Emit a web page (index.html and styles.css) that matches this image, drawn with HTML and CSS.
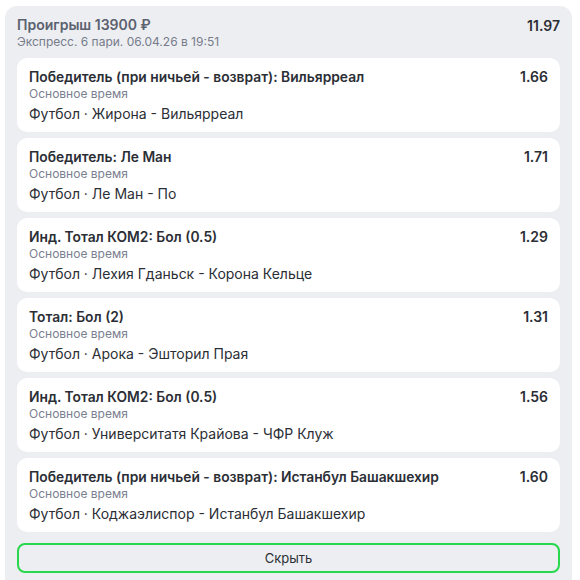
FILE: index.html
```html
<!DOCTYPE html>
<html lang="ru">
<head>
<meta charset="utf-8">
<link rel="stylesheet" href="styles.css">
</head>
<body>
<div class="bet">
  <div class="bet-head">
    <div class="bet-info">
      <div class="bet-title">Проигрыш 13900 ₽</div>
      <div class="bet-date">Экспресс. 6 пари. 06.04.26 в 19:51</div>
    </div>
    <div class="bet-odds">11.97</div>
  </div>
  <div class="events">
    <div class="event">
      <div class="event-row"><div class="event-title">Победитель (при ничьей - возврат): Вильярреал</div><div class="event-odds">1.66</div></div>
      <div class="event-sub">Основное время</div>
      <div class="event-match">Футбол · Жирона - Вильярреал</div>
    </div>
    <div class="event">
      <div class="event-row"><div class="event-title">Победитель: Ле Ман</div><div class="event-odds">1.71</div></div>
      <div class="event-sub">Основное время</div>
      <div class="event-match">Футбол · Ле Ман - По</div>
    </div>
    <div class="event">
      <div class="event-row"><div class="event-title">Инд. Тотал КОМ2: Бол (0.5)</div><div class="event-odds">1.29</div></div>
      <div class="event-sub">Основное время</div>
      <div class="event-match">Футбол · Лехия Гданьск - Корона Кельце</div>
    </div>
    <div class="event">
      <div class="event-row"><div class="event-title">Тотал: Бол (2)</div><div class="event-odds">1.31</div></div>
      <div class="event-sub">Основное время</div>
      <div class="event-match">Футбол · Арока - Эшторил Прая</div>
    </div>
    <div class="event">
      <div class="event-row"><div class="event-title">Инд. Тотал КОМ2: Бол (0.5)</div><div class="event-odds">1.56</div></div>
      <div class="event-sub">Основное время</div>
      <div class="event-match">Футбол · Университатя Крайова - ЧФР Клуж</div>
    </div>
    <div class="event">
      <div class="event-row"><div class="event-title">Победитель (при ничьей - возврат): Истанбул Башакшехир</div><div class="event-odds">1.60</div></div>
      <div class="event-sub">Основное время</div>
      <div class="event-match">Футбол · Коджаэлиспор - Истанбул Башакшехир</div>
    </div>
  </div>
  <button class="hide-btn">Скрыть</button>
</div>
</body>
</html>
```
FILE: styles.css
```css
html, body {
  margin: 0;
  padding: 0;
  background: #ffffff;
}
body {
  font-family: Inter, "Noto Sans", sans-serif;
  color: #2b2e35;
}
.bet {
  margin: 6px 8px 0 5px;
  background: #edeef2;
  border-radius: 12px;
  padding: 9px 12px 20px 12px;
}
.bet-head {
  display: flex;
  justify-content: space-between;
  align-items: flex-start;
}
.bet-title {
  font-size: 14px;
  line-height: 19px;
  font-weight: 600;
  color: #5b616e;
}
.bet-date {
  font-size: 12px;
  line-height: 16px;
  color: #767c8a;
}
.bet-odds {
  font-size: 14px;
  line-height: 19px;
  font-weight: 600;
  color: #2b2e35;
  padding-top: 1px;
}
.events {
  margin-top: 8px;
  display: flex;
  flex-direction: column;
  gap: 6px;
}
.event {
  background: #ffffff;
  border-radius: 10px;
  padding: 10px 12px 8px 12px;
}
.event-row {
  display: flex;
  justify-content: space-between;
}
.event-title {
  font-size: 13.8px;
  line-height: 18px;
  font-weight: 600;
  color: #2b2e35;
}
.event-odds {
  font-size: 14px;
  line-height: 18px;
  font-weight: 600;
  color: #2b2e35;
}
.event-sub {
  font-size: 12px;
  line-height: 16px;
  color: #7a8090;
}
.event-match {
  margin-top: 2px;
  font-size: 14px;
  line-height: 20px;
  color: #2b2e35;
}
.hide-btn {
  display: block;
  width: 100%;
  margin-top: 11px;
  height: 30px;
  border: 2px solid #27d84c;
  border-radius: 8px;
  background: transparent;
  font-family: Inter, "Noto Sans", sans-serif;
  font-size: 13px;
  color: #2b2e35;
}
```
